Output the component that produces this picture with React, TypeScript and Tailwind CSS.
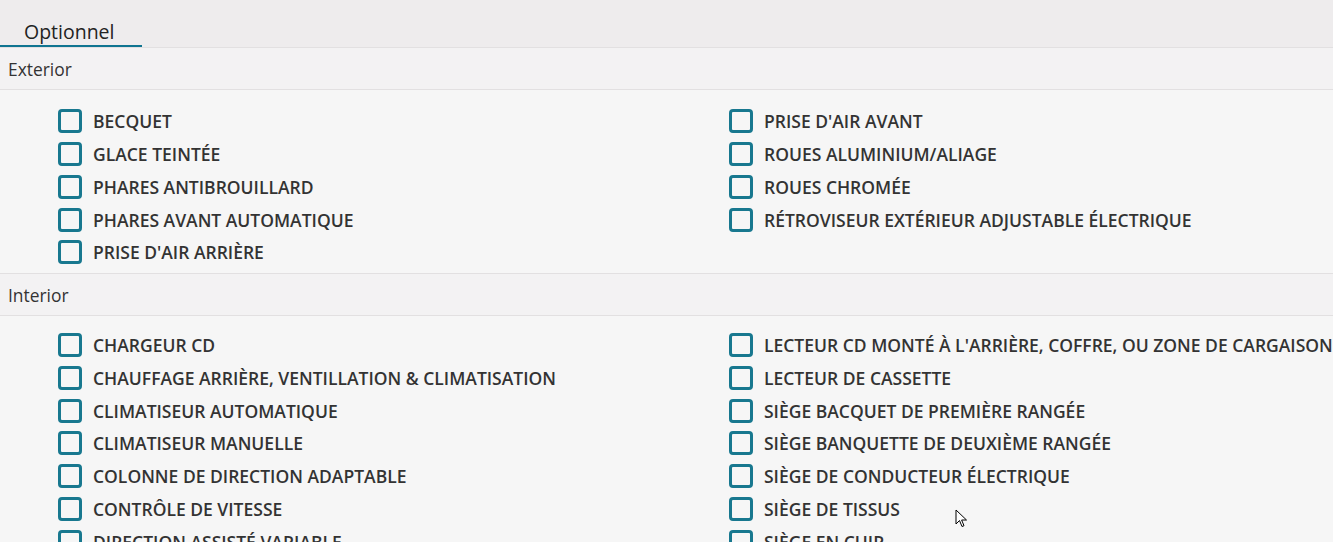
import React from "react";

interface Section {
  title: string;
  pad: string;
  left: string[];
  right: string[];
}

const sections: Section[] = [
  {
    title: "Exterior",
    pad: "pt-[15px] pb-[4px]",
    left: ["BECQUET", "GLACE TEINTÉE", "PHARES ANTIBROUILLARD", "PHARES AVANT AUTOMATIQUE", "PRISE D'AIR ARRIÈRE"],
    right: ["PRISE D'AIR AVANT", "ROUES ALUMINIUM/ALIAGE", "ROUES CHROMÉE", "RÉTROVISEUR EXTÉRIEUR ADJUSTABLE ÉLECTRIQUE"],
  },
  {
    title: "Interior",
    pad: "pt-[13px] pb-[4px]",
    left: [
      "CHARGEUR CD",
      "CHAUFFAGE ARRIÈRE, VENTILLATION & CLIMATISATION",
      "CLIMATISEUR AUTOMATIQUE",
      "CLIMATISEUR MANUELLE",
      "COLONNE DE DIRECTION ADAPTABLE",
      "CONTRÔLE DE VITESSE",
      "DIRECTION ASSISTÉ VARIABLE",
      "GLACES ÉLECTRIQUES",
    ],
    right: [
      "LECTEUR CD MONTÉ À L'ARRIÈRE, COFFRE, OU ZONE DE CARGAISON",
      "LECTEUR DE CASSETTE",
      "SIÈGE BACQUET DE PREMIÈRE RANGÉE",
      "SIÈGE BANQUETTE DE DEUXIÈME RANGÉE",
      "SIÈGE DE CONDUCTEUR ÉLECTRIQUE",
      "SIÈGE DE TISSUS",
      "SIÈGE EN CUIR",
      "TOIT OUVRANT",
    ],
  },
];

function Option({ label }: { label: string }) {
  return (
    <label className="flex h-[32.75px] items-center gap-[11px] whitespace-nowrap">
      <span className="h-6 w-6 shrink-0 rounded-[4px] border-[3px] border-[#18788f] bg-[#f6f6f6]" />
      <span className="text-[17.5px] font-semibold text-[#333333]">{label}</span>
    </label>
  );
}

export default function App() {
  return (
    <div className="relative h-[542px] overflow-hidden bg-[#f6f6f6] font-['Open_Sans',sans-serif]">
      <div className="flex h-[48px] items-end border-b border-[#e2e0e1] bg-[#eeeced]">
        <div className="w-[142px] border-b-2 border-[#0f7490] pl-6 text-[19.5px] leading-[26px] text-[#222]">
          Optionnel
        </div>
      </div>
      {sections.map((s) => (
        <div key={s.title} className="border-b border-[#e2e0e1]">
          <div className="flex h-[42px] items-center border-b border-[#e2e0e1] bg-[#f3f2f3] px-2 pt-[2px] text-[17.4px] text-[#333]">
            {s.title}
          </div>
          <div className={`grid grid-cols-[671px_1fr] pl-[58px] ${s.pad}`}>
            <div>
              {s.left.map((l) => (
                <Option key={l} label={l} />
              ))}
            </div>
            <div>
              {s.right.map((l) => (
                <Option key={l} label={l} />
              ))}
            </div>
          </div>
        </div>
      ))}
      <svg className="absolute left-[955px] top-[509px]" width="13" height="20" viewBox="0 0 13 20">
        <path d="M1 1 L1 15 L4.5 11.5 L7 17.5 L9 16.7 L6.6 11 L11.5 11 Z" fill="#fff" stroke="#000" strokeWidth="1" strokeLinejoin="round" />
      </svg>
    </div>
  );
}
